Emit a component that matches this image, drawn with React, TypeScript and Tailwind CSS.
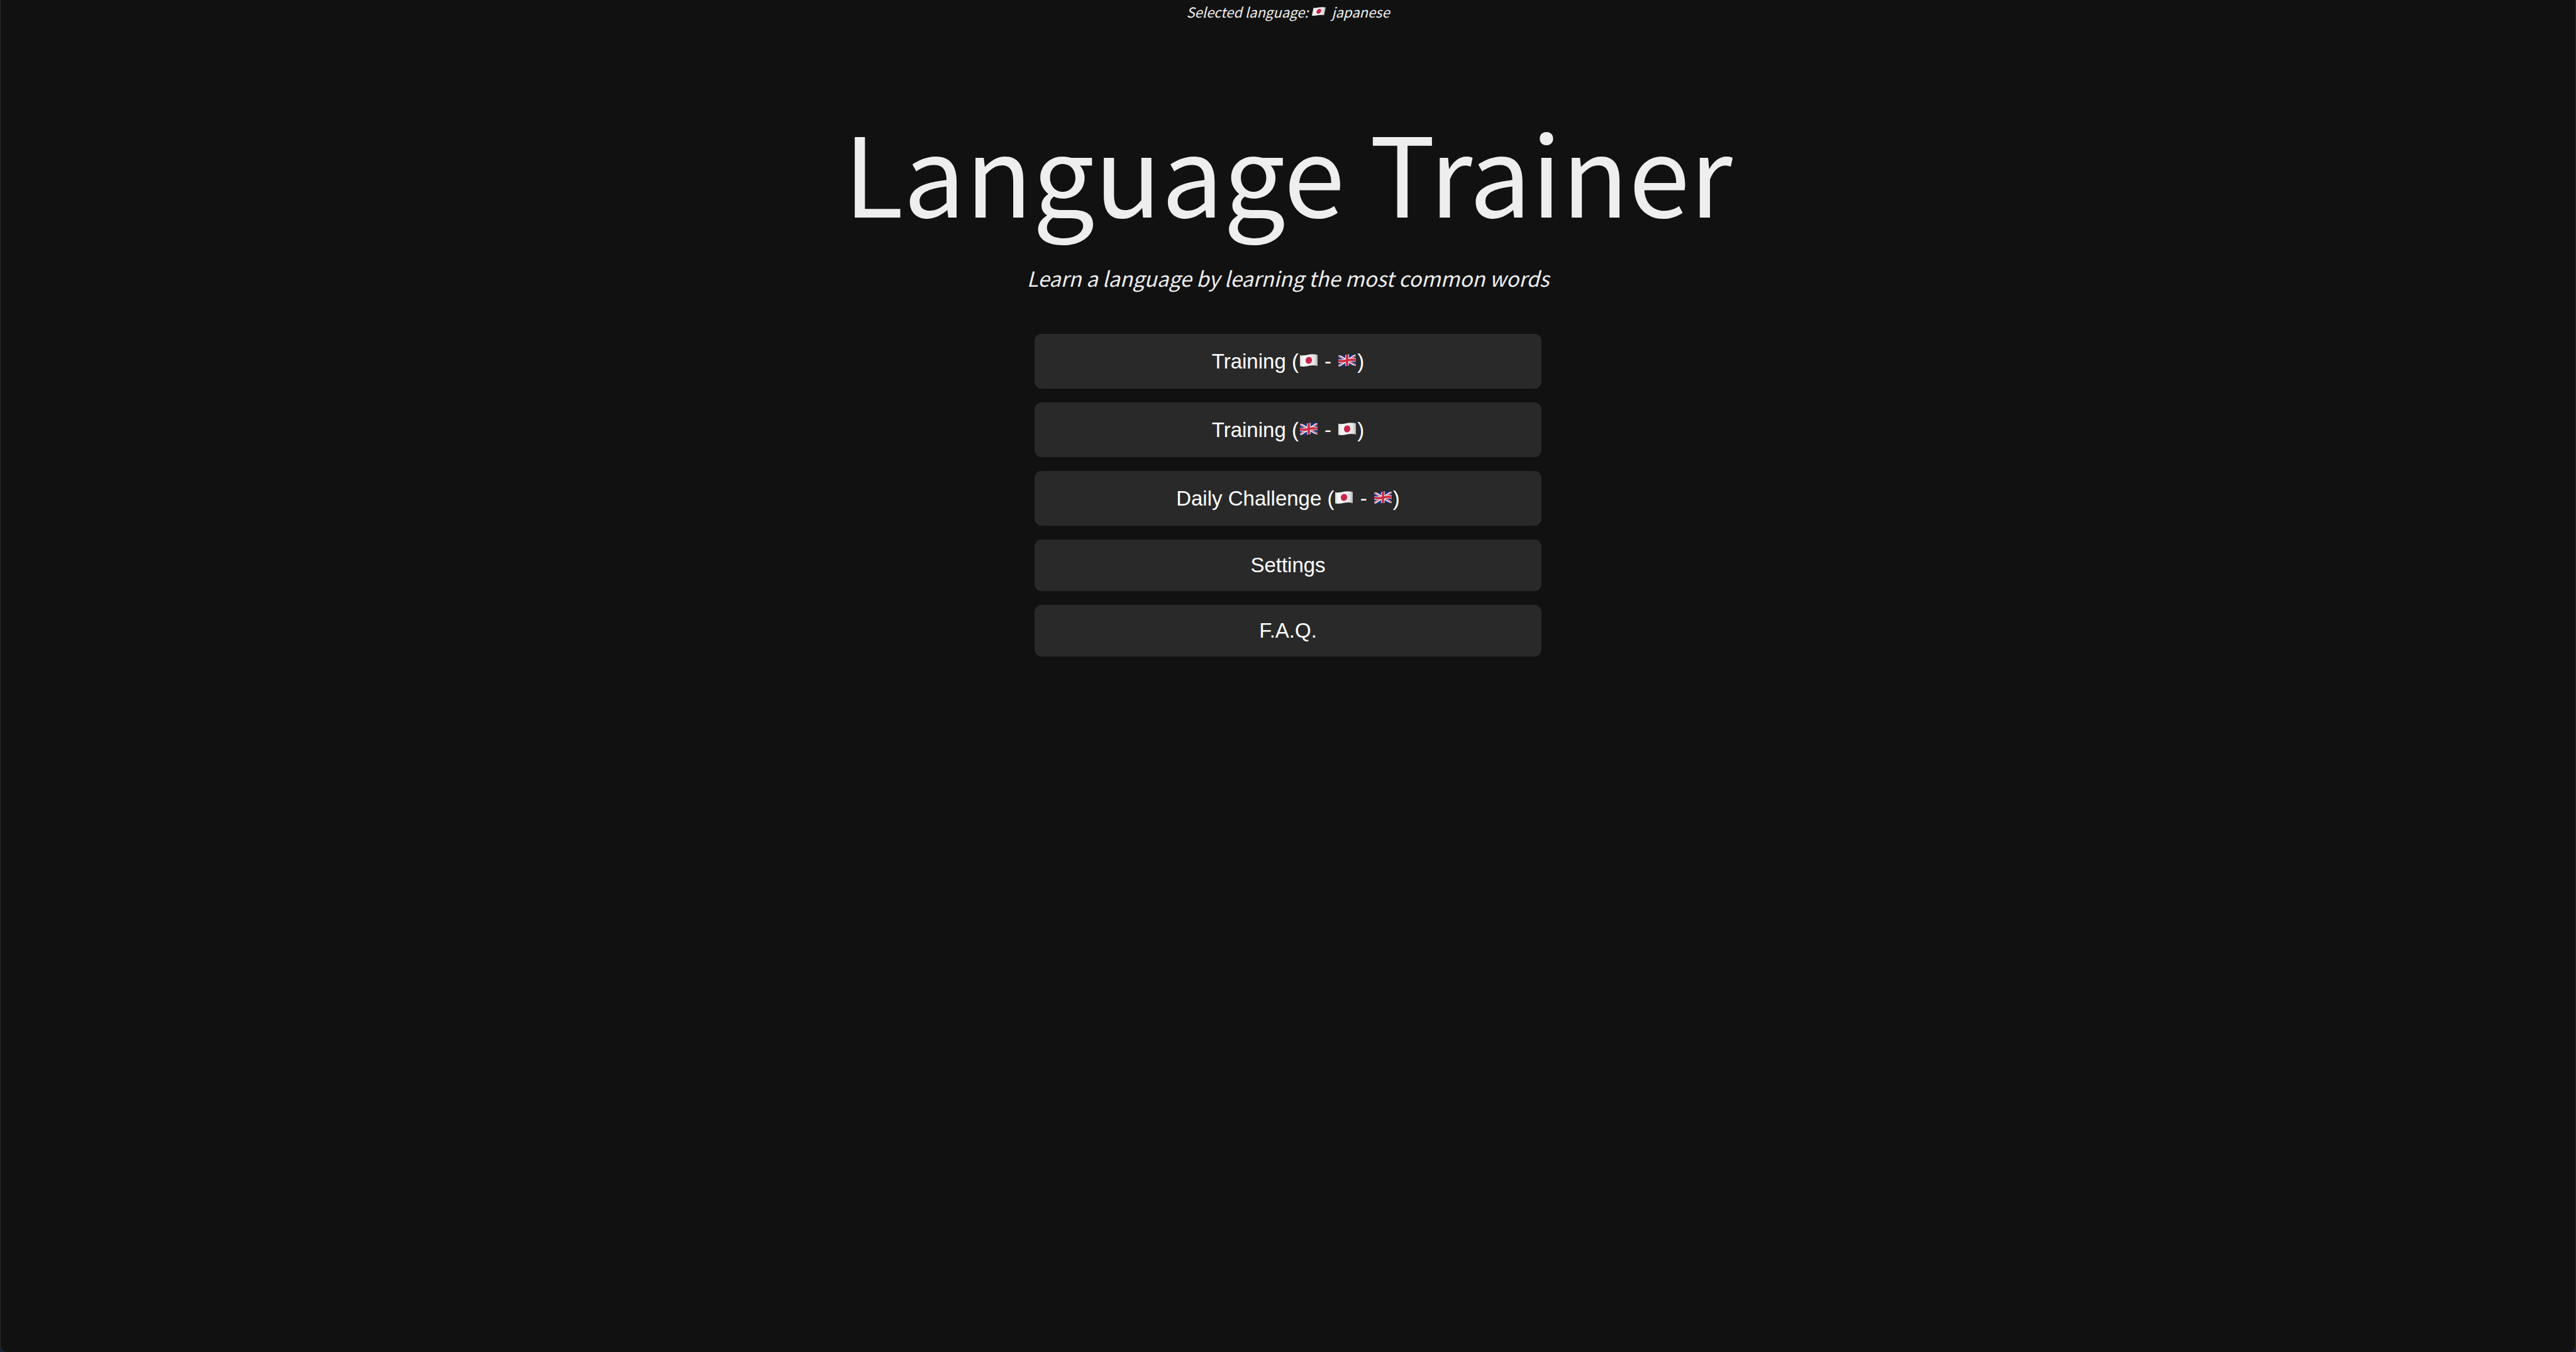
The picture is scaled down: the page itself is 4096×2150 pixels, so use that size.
import React from "react";

const cloth = "M0 2.500 C6 4.500 12 3.200 18 1.800 C26 0 34 0 42 1.800 V28.500 C34 26.500 26 27 19 28.500 C12 30 6 30.300 0 29.300 Z";

function JapanFlag({ className }: { className: string }) {
  return (
    <svg viewBox="0 0 42 30" className={className} role="img" aria-label="Japan">
      <defs>
        <linearGradient id="cloth" x1="0" y1="0" x2="1" y2="0">
          <stop offset="0" stopColor="#d8d8d8" />
          <stop offset="0.15" stopColor="#f4f4f4" />
          <stop offset="0.55" stopColor="#f0f0f0" />
          <stop offset="0.85" stopColor="#e0e0e0" />
          <stop offset="1" stopColor="#b0b0b0" />
        </linearGradient>
      </defs>
      <path d={cloth} fill="url(#cloth)" />
      <ellipse cx="21" cy="15" rx="7.5" ry="8.4" fill="#c8254b" transform="rotate(20 21 15)" />
    </svg>
  );
}

function UkFlag({ className }: { className: string }) {
  return (
    <svg viewBox="0 0 42 30" className={className} role="img" aria-label="United Kingdom">
      <defs>
        <clipPath id="wave">
          <path d={cloth} />
        </clipPath>
      </defs>
      <g clipPath="url(#wave)">
        <rect width="42" height="30" fill="#17347c" />
        <path d="M0 3 L42 28 M0 29 L42 2" stroke="#f0f0f4" strokeWidth="5" />
        <path d="M0 4 L20 16 M42 27 L22 15 M0 28 L19 16 M42 3 L23 15" stroke="#cf2740" strokeWidth="1.6" />
        <path d="M21 0 V30 M0 16 C7 18 13 17 20 15.500 C28 13 35 13 42 14.500" stroke="#f0f0f4" strokeWidth="8.4" fill="none" />
        <path d="M21 0 V30 M0 16 C7 18 13 17 20 15.500 C28 13 35 13 42 14.500" stroke="#cf2c47" strokeWidth="5.6" fill="none" />
      </g>
    </svg>
  );
}

const flag = "mx-[2px] mb-1 h-[20px] w-[28px] shrink-0";

function MenuButton({ children, tall = false }: { children: React.ReactNode; tall?: boolean }) {
  return (
    <button
      type="button"
      className={`flex w-full items-center justify-center rounded-[11px] bg-[#292929] font-['Liberation_Sans',Arial,sans-serif] text-[33px] whitespace-pre text-white hover:bg-[#333333] ${tall ? "h-[87px]" : "h-[82px]"}`}
    >
      {children}
    </button>
  );
}

export default function App() {
  return (
    <div className="bg-[#17223c]">
      <main className="flex min-h-screen flex-col items-center rounded-b-[10px] border-x border-[#2c2c2c] bg-[#111111] font-['Noto_Sans_CJK_JP',sans-serif] text-[#eeeeee]">
        <p className="flex h-[36px] items-center text-[22px] whitespace-pre italic">
          <span>Selected language:</span>
          <JapanFlag className="mr-[10px] ml-[7px] h-[14px] w-[20px] shrink-0 -skew-x-12" />
          <span>japanese</span>
        </p>
        <h1 className="mt-[106px] text-[175px] leading-[256px]">Language Trainer</h1>
        <p className="mt-4 text-[33px] leading-[56px] italic">Learn a language by learning the most common words</p>
        <nav className="mt-[61px] flex w-[806px] flex-col gap-[22px]">
          <MenuButton tall>Training (<JapanFlag className={flag} /> - <UkFlag className={flag} />)</MenuButton>
          <MenuButton tall>Training (<UkFlag className={flag} /> - <JapanFlag className={flag} />)</MenuButton>
          <MenuButton tall>Daily Challenge (<JapanFlag className={flag} /> - <UkFlag className={flag} />)</MenuButton>
          <MenuButton>Settings</MenuButton>
          <MenuButton>F.A.Q.</MenuButton>
        </nav>
      </main>
    </div>
  );
}
